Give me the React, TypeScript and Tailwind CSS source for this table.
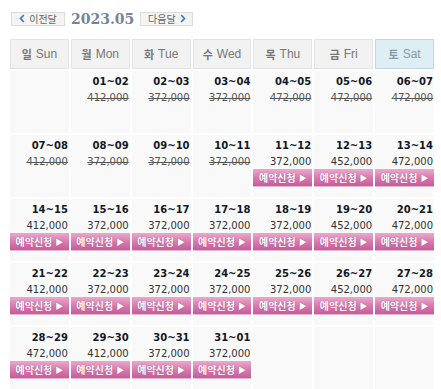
import React from 'react';

type Day = { range: string; price: string; closed?: boolean } | null;

const DAYS = [
  { ko: '일', en: 'Sun' },
  { ko: '월', en: 'Mon' },
  { ko: '화', en: 'Tue' },
  { ko: '수', en: 'Wed' },
  { ko: '목', en: 'Thu' },
  { ko: '금', en: 'Fri' },
  { ko: '토', en: 'Sat' },
];

const p = (d: number) => String(d).padStart(2, '0');

// price per night, May 1..31
const PRICES = [
  '412,000', '372,000', '372,000', '472,000', '472,000', '472,000',
  '412,000', '372,000', '372,000', '372,000', '372,000', '452,000', '472,000',
  '412,000', '372,000', '372,000', '372,000', '372,000', '452,000', '472,000',
  '412,000', '372,000', '372,000', '372,000', '372,000', '452,000', '472,000',
  '472,000', '412,000', '372,000', '372,000',
];

// May 2023 starts on Monday
const CELLS: Day[] = [null];
for (let d = 1; d <= 31; d++) {
  CELLS.push({ range: `${p(d)}~${p(d === 31 ? 1 : d + 1)}`, price: PRICES[d - 1], closed: d <= 10 });
}
while (CELLS.length < 35) CELLS.push(null);

function Chevron({ dir }: { dir: 'left' | 'right' }) {
  return (
    <svg width="6" height="9" viewBox="0 0 6 9" className="shrink-0">
      <path
        d={dir === 'left' ? 'M4.8 1 L1.6 4.5 L4.8 8' : 'M1.2 1 L4.4 4.5 L1.2 8'}
        fill="none"
        stroke="#3b7fd0"
        strokeWidth="1.8"
      />
    </svg>
  );
}

export default function App() {
  return (
    <div className="w-[441px] h-[389px] bg-white overflow-hidden font-['DejaVu_Sans',sans-serif]">
      {/* month nav */}
      <div className="flex items-center gap-[6px] pl-[11px] pt-[11px] h-[26px]">
        <button className="flex items-center justify-center gap-[4px] w-[54px] h-[14px] bg-[#f4f4f4] border border-[#dcdcdc] text-[10px] leading-none text-[#666] font-['Noto_Sans_CJK_KR',sans-serif]">
          <Chevron dir="left" />
          이전달
        </button>
        <span className="font-['DejaVu_Serif',serif] font-bold text-[14px] leading-none text-[#75849a]">2023.05</span>
        <button className="flex items-center justify-center gap-[4px] w-[53px] h-[14px] bg-[#f4f4f4] border border-[#dcdcdc] text-[10px] leading-none text-[#666] font-['Noto_Sans_CJK_KR',sans-serif]">
          다음달
          <Chevron dir="right" />
        </button>
      </div>

      {/* calendar */}
      <div className="ml-[10px] mt-[13px] w-[424px] grid grid-cols-7 gap-[2px]">
        {DAYS.map((d, i) => (
          <div
            key={d.en}
            className={`h-[30px] flex items-center justify-center gap-[4px] border text-[12px] ${
              i === 6 ? 'bg-[#ddeef4] border-[#bcd8e6] text-[#8a9aa4]' : 'bg-[#f2f2f2] border-[#e4e4e4] text-[#777]'
            }`}
          >
            <span className="font-['Noto_Sans_CJK_KR',sans-serif] font-bold text-[11px]">{d.ko}</span>
            <span className="font-['Liberation_Sans',sans-serif]">{d.en}</span>
          </div>
        ))}
        {CELLS.map((c, i) => (
          <div key={i} className="h-[62px] bg-[#f9f9f9] flex flex-col pt-[3px]">
            {c && (
              <>
                <div className="text-right pr-[1px] text-[10px] leading-[16px] font-bold text-[#111827]">{c.range}</div>
                <div
                  className={`mt-[1px] text-right pr-[1px] text-[10px] leading-[14px] ${
                    c.closed ? 'line-through text-[#555]' : 'text-[#333]'
                  }`}
                >
                  {c.price}
                </div>
                {!c.closed && (
                  <button className="h-[18px] w-full flex items-center justify-center gap-[3px] bg-gradient-to-b from-[#eaa9ce] via-[#d87bb0] to-[#c45d9a] border-b border-[#e9b8d3] text-white text-[10px] font-semibold font-['Noto_Sans_CJK_KR',sans-serif] [text-shadow:0_0_1px_rgba(120,20,80,0.6)]">
                    예약신청
                    <span className="text-[8px] leading-none">▶</span>
                  </button>
                )}
              </>
            )}
          </div>
        ))}
      </div>
    </div>
  );
}
